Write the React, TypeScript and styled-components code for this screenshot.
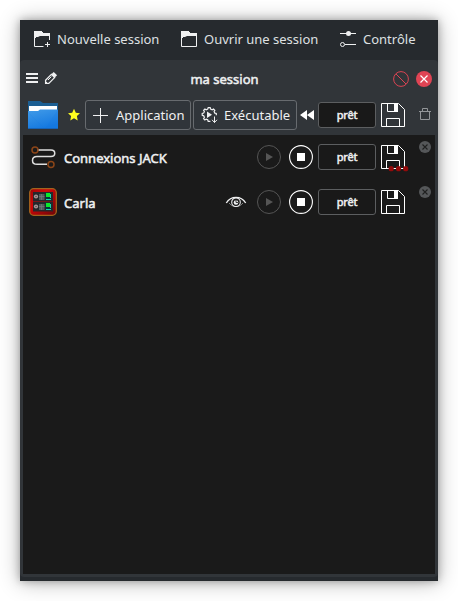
import React from "react";
import styled, { createGlobalStyle } from "styled-components";

const GlobalStyle = createGlobalStyle`
  *, *::before, *::after { box-sizing: border-box; }
  body { margin: 0; background: #fff; overflow: hidden; }
  svg { display: block; flex: none; }
`;

const Page = styled.main`
  height: 601px;
  padding: 20px;
  font: 13px/18px "Noto Sans", sans-serif;
  color: #eff0f1;
`;

const Window = styled.section`
  display: flex;
  flex-direction: column;
  width: 418px;
  height: 561px;
  padding-bottom: 4px;
  background: #262a2e;
  box-shadow: 0 1px 20px rgba(0, 0, 0, 0.3), 0 0 8px rgba(0, 0, 0, 0.28);
`;

const MenuBar = styled.nav`
  display: flex;
  height: 40px;
  padding-left: 13px;
  gap: 21px;
`;

const MenuButton = styled.button<{ $width: number }>`
  display: flex;
  align-items: center;
  gap: 7px;
  width: ${(p) => p.$width}px;
  padding: 0 0 2px;
  border: 0;
  background: none;
  color: #dfe0e2;
  font: inherit;
  white-space: nowrap;
`;

const Panel = styled.div`
  display: flex;
  flex-direction: column;
  flex: 1;
  padding: 0 3px 3px;
  border-radius: 4px;
  background: #313539;
`;

const TitleRow = styled.header`
  display: grid;
  grid-template-columns: 16px 16px 1fr 16px 16px;
  align-items: center;
  column-gap: 3px;
  height: 35px;
  padding: 0 3px 0 1px;
`;

const Title = styled.h1`
  margin: 0 7px 0 0;
  padding-top: 3px;
  text-align: center;
  font-size: 13px;
  font-weight: 400;
  -webkit-text-stroke: 0.5px currentColor;
`;

const WindowActions = styled.div`
  display: flex;
  gap: 7px;
  padding-top: 3px;
  margin-left: -4px;
`;

const ToolRow = styled.div`
  display: grid;
  grid-template-columns: 30px 14px 106px 104px 14px 58px 24px 14px;
  align-items: center;
  height: 40px;
  padding-left: 5px;
  & > :nth-child(2) { margin-left: 9px; }
  & > :nth-child(3) { margin-left: 13px; }
  & > :nth-child(4) { margin-left: 15px; }
  & > :nth-child(5) { margin-left: 18px; }
  & > :nth-child(6) { margin-left: 22px; }
  & > :nth-child(7) { margin-left: 27px; }
  & > :nth-child(8) { margin-left: 40px; margin-bottom: 2px; }
`;

const ToolButton = styled.button<{ $width: number }>`
  display: flex;
  align-items: center;
  gap: 6px;
  width: ${(p) => p.$width}px;
  height: 30px;
  padding: 0 0 0 6px;
  border: 1px solid #676b6f;
  border-radius: 3px;
  background: #30353a;
  color: #eff0f1;
  font: inherit;
  white-space: nowrap;
`;

const Status = styled.div`
  display: flex;
  align-items: center;
  justify-content: center;
  width: 58px;
  height: 26px;
  border: 1px solid #5c5e60;
  border-radius: 3px;
  background: #191919;
  font-size: 11px;
  line-height: 16px;
  letter-spacing: -0.15px;
  -webkit-text-stroke: 0.5px currentColor;
`;

const ClientList = styled.ul`
  flex: 1;
  margin: 0;
  padding: 0;
  background: #1a1a1a;
  list-style: none;
`;

const ClientRow = styled.li`
  display: grid;
  grid-template-columns: 28px 156px 22px 24px 24px 58px 24px 12px;
  align-items: center;
  height: 45px;
  padding: 0 0 2px 6px;
  & > :nth-child(2) { margin-left: 7px; }
  & > :nth-child(3) { margin-left: 12px; }
  & > :nth-child(4) { margin-left: 22px; }
  & > :nth-child(5) { margin-left: 30px; }
  & > :nth-child(6) { margin-left: 35px; }
  & > :nth-child(7) { margin-left: 40px; }
  & > :nth-child(8) { margin-left: 54px; margin-bottom: 19px; }
`;

const ClientName = styled.span`
  padding-top: 2px;
  white-space: nowrap;
  -webkit-text-stroke: 0.5px currentColor;
`;

const IconSlot = styled.span`
  display: block;
`;

function FolderIcon({ add = false }: { add?: boolean }) {
  return (
    <svg width="17" height="17" viewBox="0 0 17 17">
      <path d="M1 0h8v1h1v1h7v3H7L5 6H3v1H1z" fill="#eff0f1" />
      <path d={add ? "M1.5 5v10.5h9M16.5 4v5" : "M1.5 5v10.5h15V4"} fill="none" stroke="#eff0f1" />
      {add && <path d="M12 13.5h5M14.5 11v5" stroke="#eff0f1" />}
    </svg>
  );
}

function SlidersIcon() {
  return (
    <svg width="16" height="17" viewBox="0 0 16 17" fill="none" stroke="#eff0f1">
      <path d="M0 2.5h16M5 13.5h11" />
      <circle cx="8.5" cy="2.5" r="2.5" fill="#eff0f1" stroke="none" />
      <circle cx="2.5" cy="13.5" r="2" />
    </svg>
  );
}

function MenuIcon() {
  return (
    <svg width="16" height="16" viewBox="0 0 16 16">
      <path d="M2 3h12v2H2zM2 7h12v2H2zM2 11h12v2H2z" fill="#eff0f1" />
    </svg>
  );
}

function PencilIcon() {
  return (
    <svg width="16" height="16" viewBox="0 0 16 16" fill="none" stroke="#eff0f1" strokeWidth="1.3">
      <path d="m2.6 10.2 5.8-5.8 3.2 3.2-5.8 5.8H2.6z" />
      <path d="m8.4 4.2 2.3-2.3 3.4 3.4-2.3 2.3z" fill="#eff0f1" stroke="none" />
      <path d="m5 10 3.4-3.4" strokeWidth="1" />
      <path d="M2 12h2v2H2z" fill="#eff0f1" stroke="none" />
    </svg>
  );
}

function ForbiddenIcon() {
  return (
    <svg width="16" height="16" viewBox="0 0 16 16" fill="none" stroke="#da4453">
      <circle cx="8" cy="8" r="7.4" />
      <path d="m3 3 10 10" />
    </svg>
  );
}

function CloseIcon() {
  return (
    <svg width="16" height="16" viewBox="0 0 16 16">
      <circle cx="8" cy="8" r="8" fill="#e04454" />
      <path d="m4.5 4.5 7 7m0-7-7 7" stroke="#fff" strokeWidth="1.2" />
    </svg>
  );
}

function ProjectFolderIcon() {
  return (
    <svg width="30" height="28" viewBox="0 0 30 28">
      <defs>
        <linearGradient id="folderFace" x1="0" y1="0" x2="0.4" y2="1">
          <stop offset="0" stopColor="#429be8" />
          <stop offset="1" stopColor="#1579e0" />
        </linearGradient>
      </defs>
      <path d="M0 0h12l3 2h15v12H0z" fill="#1c5f93" />
      <path d="M1 5h28v7H1z" fill="#fff" />
      <path d="M0 10h10l2-1.5h18V28H0z" fill="url(#folderFace)" />
      <path d="M0 10v2l17 16h13V8.500L17 28 0 11z" fill="#1273dc" opacity=".15" />
      <path d="M0 27h30v1H0z" fill="#1762b5" />
    </svg>
  );
}

function StarIcon() {
  return (
    <svg width="14" height="14" viewBox="0 0 14 14">
      <path d="m7 .8 1.8 3.9 4.2.5-3.1 2.9.8 4.3L7 10.3l-3.7 2.1.8-4.3L1 5.2l4.2-.5z" fill="#ffff20" />
    </svg>
  );
}

function PlusIcon() {
  return (
    <svg width="18" height="18" viewBox="0 0 18 18">
      <path d="M1 9.5h15M8.5 2v15" stroke="#eff0f1" />
    </svg>
  );
}

function ExecuteIcon() {
  return (
    <svg width="18" height="18" viewBox="0 0 18 18" fill="none" stroke="#eff0f1">
      <path
        d="M16.3 9.2V7.4l-1.5-.3-.7-1.5.7-1.3-1.3-1.3-1.3.8-1.6-.7-.4-1.5h-2l-.5 1.5-1.5.7-1.3-.8-1.3 1.3.8 1.3-.7 1.5-1.5.4v1.900l1.5.4.7 1.5-.8 1.3 1.3 1.3 1.3-.8 1.5.7.5 1.6h2.2"
        strokeWidth="1.2"
      />
      <path d="m7 5.5 5 3.3-5 3.3z" fill="#eff0f1" stroke="none" />
      <path d="M14.5 10.5v6M12 13.8l2.5 2.7 2.5-2.7" />
    </svg>
  );
}

function RewindIcon() {
  return (
    <svg width="14" height="12" viewBox="0 0 14 12">
      <path d="M7 1v10L0 6zM14 1v10L7 6z" fill="#fff" />
    </svg>
  );
}

function SaveIcon({ pending = false }: { pending?: boolean }) {
  return (
    <svg width="24" height="24" viewBox="0 0 24 24" fill="none" stroke="#fff" overflow="visible">
      <path d="M.5.5h17l6 6v17H.5zM5.5 23.5v-8h13v8" />
      <path d="M6.5.5v8h10v-8" />
      <path d="M13 0h4v9h-4z" fill="#fff" stroke="none" />
      {pending && (
        <g fill="#930b0b" stroke="none">
          <circle cx="10.2" cy="23.7" r="2.6" />
          <circle cx="17.5" cy="23.7" r="2.6" />
          <circle cx="24.7" cy="23.7" r="2.6" />
        </g>
      )}
    </svg>
  );
}

function TrashIcon() {
  return (
    <svg width="14" height="14" viewBox="0 0 14 14" fill="none" stroke="#929598">
      <path d="M1 4.5h12M4.5 4V1.5h5V4M2.5 5v7.5h9V5" />
    </svg>
  );
}

function JackIcon() {
  return (
    <svg width="28" height="28" viewBox="0 0 28 28" fill="none">
      <g strokeWidth="1.5">
        <path d="M8 7h14c5 0 5 6.5 0 6.5H8c-6 0-6 7.8 0 7.8h10" stroke="#dedede" />
        <circle cx="6" cy="7" r="3" stroke="#8b4518" />
        <circle cx="22" cy="21.4" r="3" stroke="#8b4518" />
      </g>
    </svg>
  );
}

function CarlaIcon() {
  return (
    <svg width="28" height="28" viewBox="0 0 28 28">
      <defs>
        <linearGradient id="carlaCase" x1="0" y1="0" x2="1" y2="1">
          <stop offset="0" stopColor="#9b0608" />
          <stop offset=".35" stopColor="#d20608" />
          <stop offset="1" stopColor="#690508" />
        </linearGradient>
      </defs>
      <rect x=".7" y=".7" width="26.6" height="26.6" rx="4" fill="url(#carlaCase)" stroke="#a2641e" strokeWidth="1.3" />
      {[4, 14].map((y) => (
        <g key={y} transform={`translate(4 ${y})`}>
          <path d="M0 0h20v9.5H0z" fill="#25282b" />
          <circle cx="3" cy="4.5" r="2.1" fill="#a99898" />
          <circle cx="3" cy="4.5" r=".8" fill="#685055" />
          <path d="M6 2h5.5v6H6z" fill="#555b5c" />
          <path d="M6 4.5h5.5M8.5 2v6" stroke="#747a7b" strokeWidth=".7" />
          <path d="M12.5 1H18v7h-5.5z" fill="#00363b" />
          <path d="M13 1h4v4h-4z" fill="#0be72c" />
          <path d="M13 7.5h5M17.5 2v4" stroke="#17d2a8" fill="none" />
        </g>
      ))}
    </svg>
  );
}

function EyeIcon() {
  return (
    <svg width="22" height="14" viewBox="0 0 22 14" fill="none" stroke="#eff0f1">
      <path d="M1.3 8C6 .5 16 .5 20.7 8" strokeWidth="1.4" />
      <path d="M4 8c4 4.8 10 4.8 14 0" strokeWidth=".5" />
      <circle cx="11" cy="7.2" r="4.3" strokeWidth="1.1" />
      <circle cx="11" cy="7.5" r="2.3" fill="#eff0f1" stroke="none" />
      <path d="M11 5v2.5h2" stroke="#1a1a1a" strokeWidth=".8" />
    </svg>
  );
}

function PlayIcon() {
  return (
    <svg width="24" height="24" viewBox="0 0 24 24" fill="none" stroke="#555">
      <circle cx="12" cy="12" r="11.5" />
      <path d="m9 8 7 4-7 4z" fill="#555" stroke="none" />
    </svg>
  );
}

function StopIcon() {
  return (
    <svg width="24" height="24" viewBox="0 0 24 24" fill="none" stroke="#fff">
      <circle cx="12" cy="12" r="11.4" strokeWidth="1.1" />
      <path d="M8 8h8v8H8z" fill="#fff" stroke="none" />
    </svg>
  );
}

function RemoveIcon() {
  return (
    <svg width="12" height="12" viewBox="0 0 12 12">
      <circle cx="6" cy="6" r="6" fill="#555759" />
      <path d="m3.5 3.5 5 5m0-5-5 5" stroke="#202020" strokeWidth="1.1" />
    </svg>
  );
}

interface ClientProps {
  name: string;
  icon: React.ReactNode;
  hasWindow?: boolean;
  pending?: boolean;
}

function Client({ name, icon, hasWindow, pending }: ClientProps) {
  return (
    <ClientRow>
      {icon}
      <ClientName>{name}</ClientName>
      <IconSlot>{hasWindow && <EyeIcon />}</IconSlot>
      <PlayIcon />
      <StopIcon />
      <Status>prêt</Status>
      <SaveIcon pending={pending} />
      <RemoveIcon />
    </ClientRow>
  );
}

export default function App() {
  return (
    <Page>
      <GlobalStyle />
      <Window>
        <MenuBar>
          <MenuButton $width={126}><FolderIcon add />Nouvelle session</MenuButton>
          <MenuButton $width={139}><FolderIcon />Ouvrir une session</MenuButton>
          <MenuButton $width={76}><SlidersIcon />Contrôle</MenuButton>
        </MenuBar>
        <Panel>
          <TitleRow>
            <MenuIcon />
            <PencilIcon />
            <Title>ma session</Title>
            <WindowActions><ForbiddenIcon /><CloseIcon /></WindowActions>
          </TitleRow>
          <ToolRow>
            <ProjectFolderIcon />
            <StarIcon />
            <ToolButton $width={106}><PlusIcon />Application</ToolButton>
            <ToolButton $width={104}><ExecuteIcon />Exécutable</ToolButton>
            <RewindIcon />
            <Status>prêt</Status>
            <SaveIcon />
            <TrashIcon />
          </ToolRow>
          <ClientList>
            <Client name="Connexions JACK" icon={<JackIcon />} pending />
            <Client name="Carla" icon={<CarlaIcon />} hasWindow />
          </ClientList>
        </Panel>
      </Window>
    </Page>
  );
}
